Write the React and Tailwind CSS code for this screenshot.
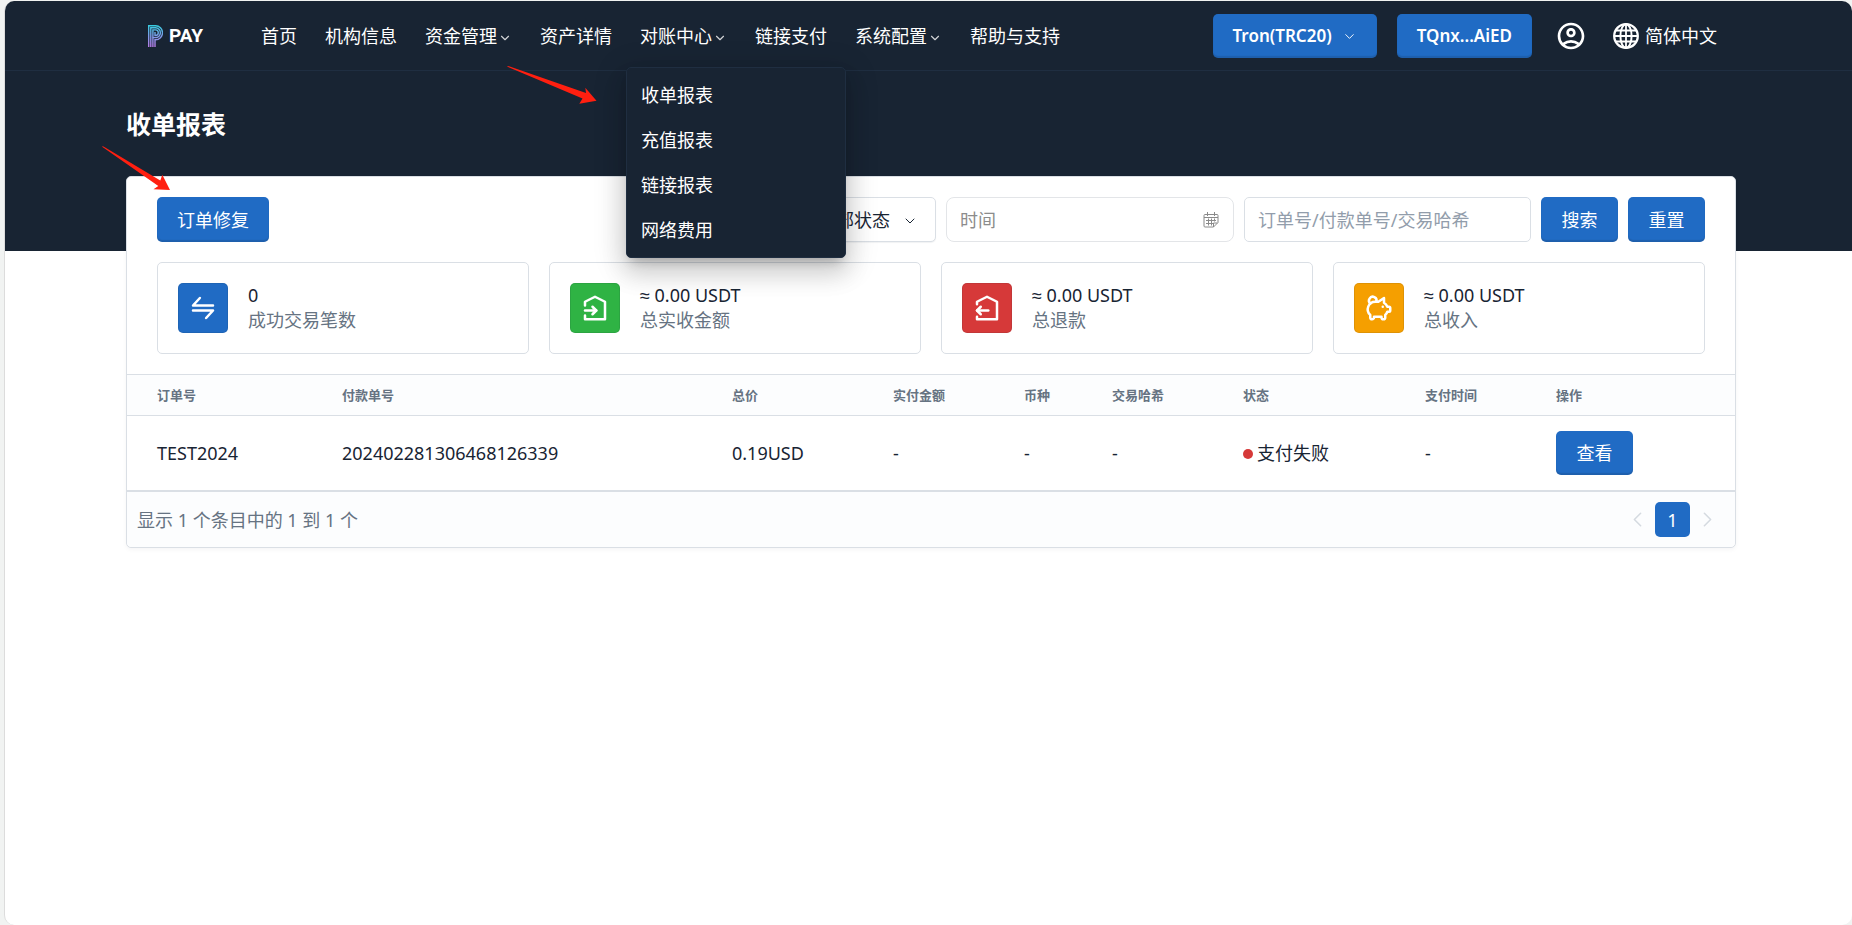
import { useState } from 'react';
import { MdOutlineAccountCircle } from 'react-icons/md';
import {
  TbChevronDown, TbChevronLeft, TbChevronRight,
  TbPigMoney, TbTransfer, TbTransferIn, TbTransferOut,
} from 'react-icons/tb';

const NAV = [
  { label: '首页' },
  { label: '机构信息' },
  { label: '资金管理', items: [] },
  { label: '资产详情' },
  { label: '对账中心', items: ['收单报表', '充值报表', '链接报表', '网络费用'] },
  { label: '链接支付' },
  { label: '系统配置', items: [] },
  { label: '帮助与支持' },
];

const STATS = [
  { icon: TbTransfer, color: 'bg-[#206bc4]', value: '0', label: '成功交易笔数' },
  { icon: TbTransferIn, color: 'bg-[#2fb344]', value: '≈ 0.00 USDT', label: '总实收金额' },
  { icon: TbTransferOut, color: 'bg-[#d63939]', value: '≈ 0.00 USDT', label: '总退款' },
  { icon: TbPigMoney, color: 'bg-[#f59f00]', value: '≈ 0.00 USDT', label: '总收入' },
];

const COLUMNS = [
  { title: '订单号', width: 'w-[205px]' },
  { title: '付款单号', width: 'w-[390px]' },
  { title: '总价', width: 'w-[161px]' },
  { title: '实付金额', width: 'w-[131px]' },
  { title: '币种', width: 'w-[88px]' },
  { title: '交易哈希', width: 'w-[131px]' },
  { title: '状态', width: 'w-[182px]' },
  { title: '支付时间', width: 'w-[131px]' },
  { title: '操作', width: 'w-[189px]' },
];

const ORDERS = [
  { id: 'TEST2024', payId: '202402281306468126339', total: '0.19USD', paid: '-', coin: '-', hash: '-', status: '支付失败', time: '-' },
];

function Button({ className = '', children, ...props }) {
  return (
    <button
      type="button"
      className={`flex min-w-[77px] items-center justify-center rounded-[5px] bg-[#206bc4] px-5 text-white shadow-[inset_0_-2px_1px_rgba(24,36,51,0.16)] hover:bg-[#1d60b0] ${className}`}
      {...props}
    >
      {children}
    </button>
  );
}

function Logo() {
  return (
    <a href="#" className="flex w-[113px] items-center gap-[6px]" aria-label="PPAY">
      <svg width="15" height="22" viewBox="0 0 15 22" fill="none" stroke="url(#logo)" strokeWidth="1.4">
        <defs>
          <linearGradient id="logo" x1="0" y1="0" x2="0" y2="22" gradientUnits="userSpaceOnUse">
            <stop stopColor="#35cfe0" />
            <stop offset="0.5" stopColor="#7d9be8" />
            <stop offset="1" stopColor="#b87ae6" />
          </linearGradient>
        </defs>
        <path d="M.7 22V.7H7.500a6.800 6.800 0 0 1 0 14H7V22" />
        <path d="M2.800 22V2.800H7.500a4.700 4.700 0 0 1 0 9.800H4.900V22" />
        <path d="M4.900 12.600V4.900H7.500a2.700 2.700 0 0 1 0 5.600H7V7" />
      </svg>
      <span className="font-['Roboto',sans-serif] text-[19px] leading-6 font-bold text-white">PAY</span>
    </a>
  );
}

function NavItem({ item, open, onToggle }) {
  if (!item.items) {
    return <a href="#" className="hover:text-white/80">{item.label}</a>;
  }
  return (
    <div className="relative">
      <button type="button" onClick={onToggle} aria-expanded={open} className="flex items-center gap-px">
        {item.label}
        <TbChevronDown size={14} className="mt-1 opacity-80" />
      </button>
      {open && item.items.length > 0 && (
        <div className="absolute top-[43px] -left-[14px] z-20 w-[220px] rounded-[5px] border border-[#1f2e41] bg-[#182433] pt-[5px] pb-1 shadow-[0_16px_24px_2px_rgba(0,0,0,0.10),0_6px_30px_5px_rgba(0,0,0,0.14),0_8px_10px_-5px_rgba(0,0,0,0.2)]">
          {item.items.map(label => (
            <a key={label} href="#" className="block px-[14px] leading-[45px] hover:bg-white/5">{label}</a>
          ))}
        </div>
      )}
    </div>
  );
}

function GlobeIcon() {
  return (
    <svg width="26" height="26" viewBox="0 0 26 26" fill="none" stroke="currentColor" strokeWidth="2">
      <circle cx="13" cy="13" r="11.8" strokeWidth="2.300" />
      <ellipse cx="13" cy="13" rx="5.600" ry="11.800" />
      <path d="M13 1v24M1 13h24M3 7.500h20M3 18.500h20" strokeWidth="1.800" />
    </svg>
  );
}

function Header() {
  const [open, setOpen] = useState('对账中心');

  return (
    <header className="flex h-[70px] items-center border-b border-[#1f2e41] bg-[#182433] pr-[135px] pl-[143px] text-white">
      <Logo />
      <nav className="flex items-center gap-7 leading-6">
        {NAV.map(item => (
          <NavItem
            key={item.label}
            item={item}
            open={open === item.label}
            onToggle={() => setOpen(open === item.label ? '' : item.label)}
          />
        ))}
      </nav>
      <div className="ml-auto flex items-center">
        <Button className="h-11 gap-[10px] text-[17px] font-semibold">
          Tron(TRC20)
          <TbChevronDown size={15} strokeWidth={1.5} className="mt-px" />
        </Button>
        <Button className="ml-5 h-11 text-[17px] font-semibold">TQnx...AiED</Button>
        <button type="button" className="ml-[23px]" aria-label="Account">
          <MdOutlineAccountCircle size={32} />
        </button>
        <button type="button" className="ml-[26px] flex items-center gap-[6px]">
          <GlobeIcon />
          简体中文
        </button>
      </div>
    </header>
  );
}

function CalendarIcon() {
  return (
    <svg width="16" height="16" viewBox="0 0 16 16" fill="none" stroke="currentColor" className="absolute top-[15px] right-[15px] text-[#8a8a8a]">
      <path d="M15 10.500V3.500a1 1 0 0 0-1-1H2a1 1 0 0 0-1 1V14a1 1 0 0 0 1 1h8.500L15 10.500" />
      <path d="M4.500 0v4M11.500 0v4M1 5.500h14M3 8.500h10M3 11.500h7M5.500 6.500v7M8.500 6.500v7M11.500 6.500v3M10.500 15v-4h4" />
    </svg>
  );
}

function Toolbar() {
  const [date, setDate] = useState('');
  const [query, setQuery] = useState('');

  return (
    <div className="flex items-center gap-[10px]">
      <Button className="h-[45px]">订单修复</Button>
      <div className="relative ml-auto">
        <select aria-label="状态" className="h-[45px] w-[134px] appearance-none rounded-[5px] border border-[#dadfe5] bg-white pl-[15px] shadow-[0_1px_1px_rgba(24,36,51,0.06)]">
          <option>全部状态</option>
        </select>
        <TbChevronDown size={16} strokeWidth={1.5} className="pointer-events-none absolute top-4 right-[18px]" />
      </div>
      <div className="relative">
        <input
          aria-label="时间" placeholder="时间" value={date} onChange={e => setDate(e.target.value)}
          className="h-[45px] w-[288px] rounded-lg border border-[#e3e5e8] px-[13px] placeholder:text-[#8c8c8c] focus:outline-none"
        />
        <CalendarIcon />
      </div>
      <input
        aria-label="搜索" placeholder="订单号/付款单号/交易哈希" value={query} onChange={e => setQuery(e.target.value)}
        className="h-[45px] w-[287px] rounded-[5px] border border-[#dadfe5] px-[13px] placeholder:text-[#929dab] focus:outline-none"
      />
      <Button className="h-[45px]">搜索</Button>
      <Button className="h-[45px]">重置</Button>
    </div>
  );
}

function StatCard({ stat }) {
  const Icon = stat.icon;
  return (
    <div className="flex items-center gap-5 rounded-[5px] border border-[#dadfe5] p-5">
      <span className={`flex h-[50px] w-[50px] items-center justify-center rounded-[5px] text-white shadow-[inset_0_0_0_1px_rgba(24,36,51,0.1)] ${stat.color}`}>
        <Icon size={30} />
      </span>
      <div className="leading-[25px]">
        <div>{stat.value}</div>
        <div className="text-[#667382]">{stat.label}</div>
      </div>
    </div>
  );
}

function OrderTable() {
  const cell = 'px-[10px] first:pl-[30px]';
  return (
    <table className="w-full table-fixed border-t border-[#dadfe5] text-left">
      <thead>
        <tr className="h-[41px] border-b border-[#dadfe5] bg-[#fcfdfe] text-[13px] text-[#667382]">
          {COLUMNS.map(c => (
            <th key={c.title} className={`${cell} ${c.width} font-bold`}>{c.title}</th>
          ))}
        </tr>
      </thead>
      <tbody>
        {ORDERS.map(o => (
          <tr key={o.id} className="h-[75px] border-b border-[#dadfe5]">
            <td className={cell}>{o.id}</td>
            <td className={cell}>{o.payId}</td>
            <td className={cell}>{o.total}</td>
            <td className={cell}>{o.paid}</td>
            <td className={cell}>{o.coin}</td>
            <td className={cell}>{o.hash}</td>
            <td className={cell}>
              <span className="flex items-center gap-1">
                <span className="mt-[2px] h-[10px] w-[10px] rounded-full bg-[#d63939]" />
                {o.status}
              </span>
            </td>
            <td className={cell}>{o.time}</td>
            <td className={cell}><Button className="h-11">查看</Button></td>
          </tr>
        ))}
      </tbody>
    </table>
  );
}

function Pagination() {
  return (
    <div className="flex h-14 items-center justify-between rounded-b-[5px] border-t border-[#dadfe5] bg-[#fcfdfe] pr-[15px] pl-[10px] text-[#667382]">
      <p>显示 1 个条目中的 1 到 1 个</p>
      <div className="flex items-center gap-[5px]">
        <button type="button" aria-label="上一页" className="text-[#d5dae0]"><TbChevronLeft size={25} strokeWidth={1.5} /></button>
        <button type="button" className="h-[35px] w-[35px] rounded-[5px] bg-[#206bc4] text-white">1</button>
        <button type="button" aria-label="下一页" className="text-[#d5dae0]"><TbChevronRight size={25} strokeWidth={1.5} /></button>
      </div>
    </div>
  );
}

function Arrows() {
  return (
    <svg width="620" height="200" viewBox="0 0 620 200" fill="#ff1f10" className="pointer-events-none absolute top-0 left-0 z-30">
      <path d="M102 146.300 103.500 146.500 160.300 180.500 162.300 174.700 170 190 153.500 189.300 158.300 186 102.500 147Z" />
      <path d="M507 66 509 66.300 586 93 585.300 87.700 596.500 100.700 579.300 103.700 582.500 98.500 508 67Z" />
    </svg>
  );
}

export default function App() {
  return (
    <div className="relative min-h-screen bg-[#f1f3f2] pt-px pl-1 font-['Noto_Sans','Liberation_Sans','Noto_Sans_CJK_SC',sans-serif] text-[18px] leading-6 text-[#182433]">
      <div className="min-h-[calc(100vh-1px)] overflow-hidden rounded-[10px] border-l border-[#dcdcdc] bg-white">
        <Header />
        <section className="bg-[#182433] pt-[33px] pb-[107px] pl-[121px]">
          <h1 className="text-[25px] leading-10 font-bold text-white">收单报表</h1>
        </section>
        <main className="-mt-[75px] mr-[116px] ml-[121px] rounded-[5px] border border-[#dadfe5] bg-white shadow-[0_2px_4px_rgba(24,36,51,0.04)]">
          <div className="flex flex-col gap-5 px-[30px] py-5">
            <Toolbar />
            <div className="grid grid-cols-4 gap-5">
              {STATS.map(s => <StatCard key={s.label} stat={s} />)}
            </div>
          </div>
          <OrderTable />
          <Pagination />
        </main>
      </div>
      <Arrows />
    </div>
  );
}
